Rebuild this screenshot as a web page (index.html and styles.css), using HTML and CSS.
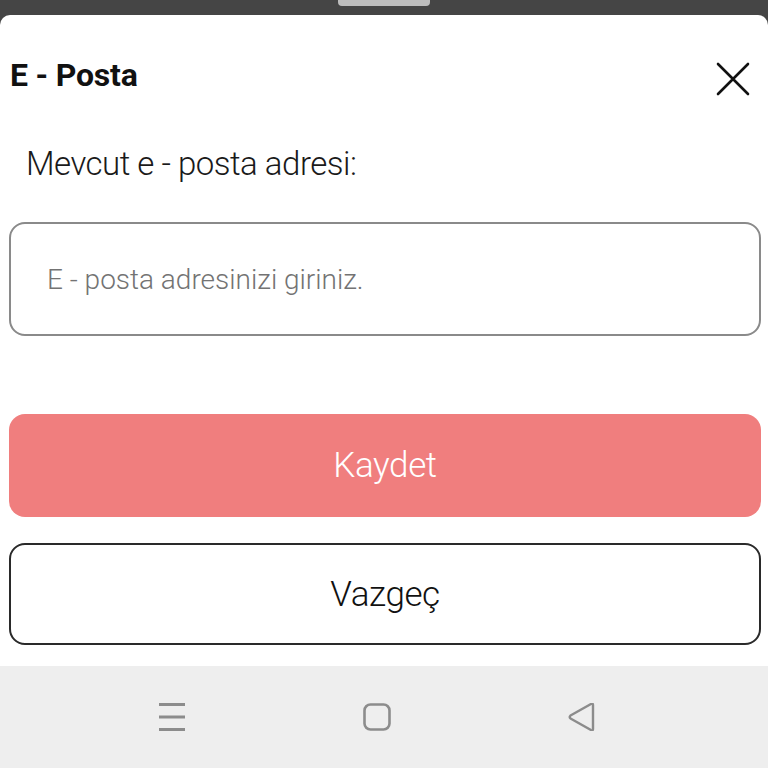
FILE: index.html
```html
<!DOCTYPE html>
<html lang="tr">
<head>
<meta charset="utf-8">
<title>E - Posta</title>
<link rel="stylesheet" href="styles.css">
</head>
<body>
<div class="status"><div class="pill"></div></div>
<div class="sheet">
  <div class="header">
    <h1 class="title">E - Posta</h1>
    <svg class="close" width="34" height="34" viewBox="0 0 34 34" aria-label="Kapat">
      <path d="M2 2 L32 32 M32 2 L2 32" stroke="#111" stroke-width="2.6" stroke-linecap="round" fill="none"/>
    </svg>
  </div>
  <div class="label">Mevcut e - posta adresi:</div>
  <input class="field" type="text" placeholder="E - posta adresinizi giriniz.">
  <button class="btn btn-primary">Kaydet</button>
  <button class="btn btn-outline">Vazgeç</button>
</div>
<div class="nav">
  <svg width="28" height="28" viewBox="0 0 28 28">
    <path d="M1 1.5 H27 M1 14 H27 M1 26.5 H27" stroke="#8c8c8c" stroke-width="3" fill="none"/>
  </svg>
  <svg width="28" height="28" viewBox="0 0 28 28">
    <rect x="1.5" y="1.5" width="25" height="25" rx="6" stroke="#8c8c8c" stroke-width="2.6" fill="none"/>
  </svg>
  <svg width="28" height="28" viewBox="0 0 28 28">
    <path d="M25 2 L25 26 Q25 28 23 27 L2.5 15.5 Q1 14 2.5 12.5 L23 1 Q25 0 25 2 Z" stroke="#8c8c8c" stroke-width="2.4" fill="none" stroke-linejoin="round"/>
  </svg>
</div>
</body>
</html>
```

FILE: styles.css
```css
* { box-sizing: border-box; }
html, body {
  margin: 0;
  padding: 0;
  background: #454545;
  font-family: Roboto, "Liberation Sans", sans-serif;
}
.status {
  height: 15px;
  display: flex;
  justify-content: center;
  align-items: flex-start;
}
.pill {
  width: 92px;
  height: 6px;
  background: #bdbdbd;
  border-radius: 0 0 4px 4px;
}
.sheet {
  background: #ffffff;
  border-radius: 10px 10px 0 0;
  height: 651px;
  padding: 42px 7px 0 9px;
  display: flex;
  flex-direction: column;
}
.header {
  display: flex;
  justify-content: space-between;
  align-items: flex-start;
  height: 36px;
}
.title {
  margin: 0 0 0 1px;
  font-family: Roboto, "Liberation Sans", sans-serif;
  font-weight: bold;
  font-size: 32px;
  line-height: 36px;
  color: #111;
  letter-spacing: -0.2px;
}
.close {
  margin-top: 5px;
  margin-right: 11px;
}
.label {
  margin: 51px 0 0 17px;
  font-weight: 300;
  font-size: 33px;
  line-height: 40px;
  color: #1a1a1a;
  letter-spacing: -0.5px;
}
.field {
  margin-top: 38px;
  width: 752px;
  height: 114px;
  border: 2px solid #8a8a8a;
  border-radius: 16px;
  padding: 0 0 0 36px;
  font-family: Roboto, "Liberation Sans", sans-serif;
  font-weight: 300;
  font-size: 28px;
  color: #333;
  background: #fff;
  outline: none;
}
.field::placeholder {
  color: #737373;
}
.btn {
  width: 752px;
  border-radius: 16px;
  font-family: Roboto, "Liberation Sans", sans-serif;
  font-weight: 300;
  font-size: 35px;
  letter-spacing: -0.4px;
  display: flex;
  align-items: center;
  justify-content: center;
  cursor: pointer;
}
.btn-primary {
  margin-top: 78px;
  height: 103px;
  background: #f07e7e;
  border: none;
  color: #ffffff;
}
.btn-outline {
  margin-top: 26px;
  height: 102px;
  background: #ffffff;
  border: 2px solid #2a2a2a;
  color: #111;
}
.nav {
  height: 102px;
  background: #eeeeee;
  display: flex;
  justify-content: center;
  align-items: center;
  gap: 177px;
  padding-right: 14px;
}
```
